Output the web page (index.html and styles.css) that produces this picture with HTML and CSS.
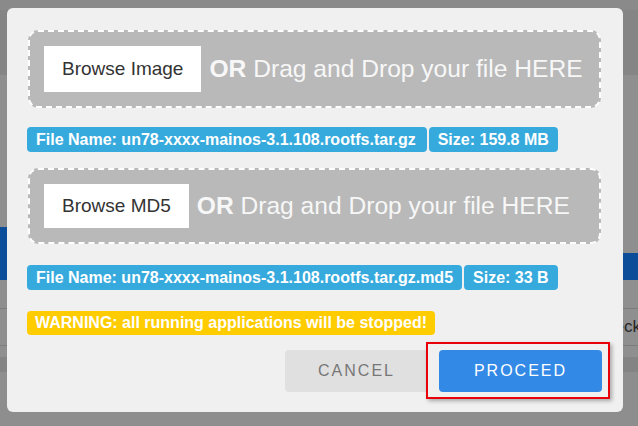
FILE: index.html
```html
<!DOCTYPE html>
<html lang="en">
<head>
    <meta charset="UTF-8">
    <meta name="viewport" content="width=device-width, initial-scale=1.0">
    <title>Firmware Upgrade</title>
    <link rel="stylesheet" href="styles.css">
</head>
<body>
    <!-- page behind the dialog, dimmed by the overlay -->
    <div class="backdrop">
        <div class="band band-top"></div>
        <div class="band band-head"></div>
        <div class="band band-plain"></div>
        <div class="band band-nav">
            <div class="nav-left"></div>
            <div class="nav-right">
                <div class="nav-gap"></div>
                <div class="nav-bar"></div>
            </div>
        </div>
        <div class="band band-rows">
            <div class="row-line"></div>
            <div class="row-text">Check</div>
        </div>
        <div class="band band-dark"></div>
    </div>

    <section class="modal">
        <div class="drop-zone">
            <button class="browse-btn">Browse Image</button>
            <span class="drop-text"><b>OR</b> Drag and Drop your file HERE</span>
        </div>
        <div class="tags tags-image">
            <span class="tag">File Name: un78-xxxx-mainos-3.1.108.rootfs.tar.gz</span>
            <span class="tag">Size: 159.8 MB</span>
        </div>

        <div class="drop-zone drop-md5">
            <button class="browse-btn">Browse MD5</button>
            <span class="drop-text"><b>OR</b> Drag and Drop your file HERE</span>
        </div>
        <div class="tags tags-md5">
            <span class="tag">File Name: un78-xxxx-mainos-3.1.108.rootfs.tar.gz.md5</span>
            <span class="tag">Size: 33 B</span>
        </div>

        <div class="warning">WARNING: all running applications will be stopped!</div>

        <div class="actions">
            <button class="btn btn-cancel">CANCEL</button>
            <span class="highlight">
                <button class="btn btn-proceed">PROCEED</button>
            </span>
        </div>
    </section>
</body>
</html>
```

FILE: styles.css
```css
body {
    margin: 0;
    background-color: #8e8e8e;
    font-family: "Liberation Sans", Arial, sans-serif;
    overflow: hidden;
}

/* dimmed page */
.backdrop {
    height: 426px;
}

.band-top {
    height: 10px;
    background-color: #8a8a8a;
}

.band-head {
    height: 65px;
    background-color: #858585;
}

.band-plain {
    height: 152px;
    background-color: #8f8f8f;
}

.band-nav {
    display: flex;
    height: 53px;
}

.nav-left {
    flex: 1;
    background-color: #0b4d99;
}

.nav-right {
    width: 20px;
    display: flex;
    flex-direction: column;
}

.nav-gap {
    height: 26px;
    background-color: #8f8f8f;
}

.nav-bar {
    flex: 1;
    background-color: #0b4d99;
}

.band-rows {
    height: 77px;
    background-color: #8f8f8f;
    padding-top: 28px;
    box-sizing: border-box;
}

.row-line {
    border-top: 1px solid #7c7c7c;
}

.row-text {
    text-align: right;
    font-size: 17px;
    line-height: 36px;
    color: #262626;
    border-bottom: 1px solid #7c7c7c;
    margin-right: -3px;
}

.band-dark {
    height: 15px;
    background-color: #848484;
}

/* dialog */
.modal {
    position: absolute;
    top: 8px;
    left: 7px;
    width: 616px;
    box-sizing: border-box;
    padding: 22px 22px 13px 20px;
    background-color: #f0f0f0;
    border-radius: 6px;
}

.drop-zone {
    display: flex;
    align-items: center;
    margin-left: 1px;
    padding: 14px;
    background-color: #b9b9b9;
    border: 2px dashed #ffffff;
    border-radius: 10px;
}

.browse-btn {
    height: 46px;
    padding: 0 18px;
    border: none;
    background-color: #ffffff;
    color: #333333;
    font-family: inherit;
    font-size: 19px;
}

.drop-md5 .browse-btn {
    height: 44px;
}

.drop-text {
    margin-left: 8px;
    font-size: 24.6px;
    color: #f7f7f7;
}

.tags {
    display: flex;
    gap: 2px;
}

.tags-image {
    margin: 19px 0 16px;
}

.tags-md5 {
    margin: 21px 0 21px;
}

.tag {
    padding: 0 9px;
    line-height: 25px;
    font-size: 16px;
    font-weight: bold;
    color: #ffffff;
    background-color: #36aadd;
    border-radius: 4px;
}

.tags-image .tag:first-child {
    padding-right: 11px;
}

.warning {
    display: inline-block;
    padding: 0 8px;
    line-height: 24px;
    font-size: 16px;
    font-weight: bold;
    color: #ffffff;
    background-color: #ffcc00;
    border-radius: 4px;
}

.actions {
    display: flex;
    justify-content: flex-end;
    align-items: center;
    margin: 7px -9px 0 0;
}

.btn {
    height: 42px;
    border: none;
    border-radius: 4px;
    font-family: inherit;
    font-size: 16px;
    letter-spacing: 2px;
    cursor: pointer;
}

.btn-cancel {
    width: 143px;
    margin-right: -2px;
    background-color: #e0e0e0;
    color: #777777;
}

.btn-proceed {
    display: block;
    width: 163px;
    background-color: #3389e6;
    color: #ffffff;
}

/* red annotation box round the proceed button */
.highlight {
    padding: 6px 6px 5px 11px;
    border: 2px solid #e8000b;
    box-shadow: 2px 2px 4px rgba(0, 0, 0, 0.3);
}
```
